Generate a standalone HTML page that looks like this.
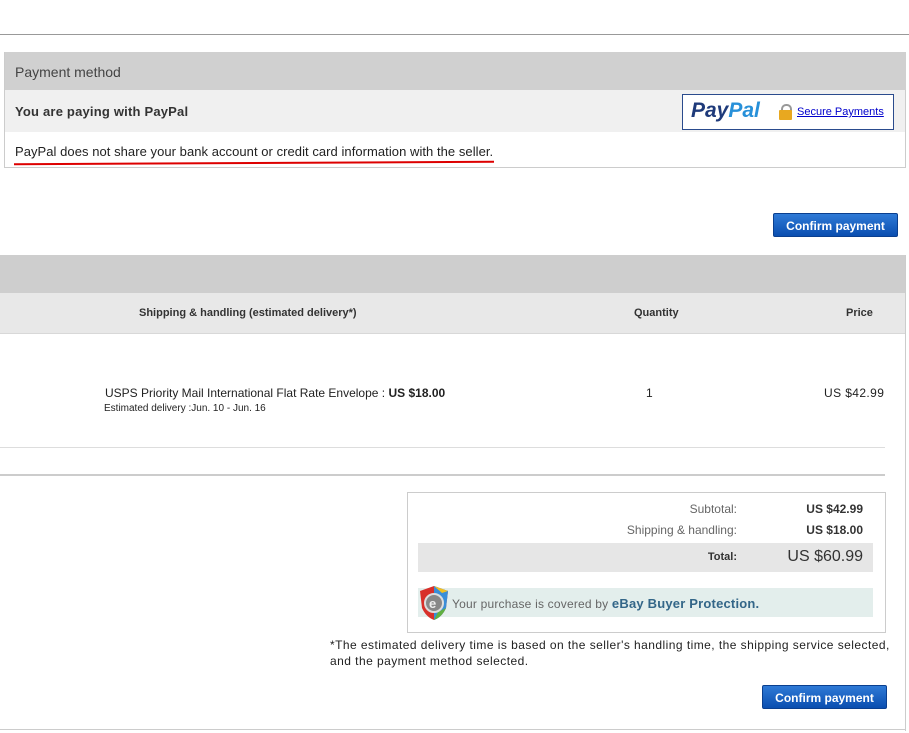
<!DOCTYPE html>
<html><head><style>
body{margin:0;width:909px;height:733px;position:relative;background:#fff;font-family:"Liberation Sans",Arial,sans-serif;overflow:hidden}
.a{position:absolute}
.btn{position:absolute;background:linear-gradient(#2f7ad6,#0a4eb0);color:#fff;font-weight:bold;font-size:12px;border-radius:2px;text-align:center;line-height:24px;border:1px solid #0a3f8f;box-sizing:border-box}
</style></head><body>
<div class="a" style="left:0;top:34px;width:909px;height:1px;background:#999"></div>
<div class="a" style="left:4px;top:52px;width:902px;height:116px;border:1px solid #ccc;box-sizing:border-box"></div>
<div class="a" style="left:5px;top:52px;width:901px;height:38px;background:#d0d0d0"></div>
<div class="a" style="left:15px;top:64px;font-size:14px;color:#444">Payment method</div>
<div class="a" style="left:5px;top:90px;width:900px;height:42px;background:#f0f0f0"></div>
<div class="a" style="left:15px;top:104px;font-size:13px;color:#333;font-weight:bold;letter-spacing:0.2px">You are paying with PayPal</div>
<div class="a" style="left:682px;top:94px;width:212px;height:36px;border:1px solid #2a4b8d;background:#fff;box-sizing:border-box"></div>
<div class="a" style="left:691px;top:99px;font-size:21px;font-weight:bold;font-style:italic;color:#1e3a7a">Pay<span style="color:#2790d9">Pal</span></div>
<div class="a" style="left:779px;top:104px;width:13px;height:15px"><div style="position:absolute;left:2px;top:0;width:7px;height:8px;border:2px solid #999;border-bottom:none;border-radius:5px 5px 0 0"></div><div style="position:absolute;left:0;top:6px;width:13px;height:10px;background:#e8a820;border-radius:1px"></div></div>
<div class="a" style="left:797px;top:106px;font-size:11px;color:#0000cc;text-decoration:underline">Secure Payments</div>
<div class="a" style="left:15px;top:144px;font-size:13px;color:#222;letter-spacing:0.05px">PayPal does not share your bank account or credit card information with the seller.</div>
<div class="a" style="left:14px;top:162px;width:480px;height:2px;background:#d00;transform:rotate(-0.3deg)"></div>
<div class="btn" style="left:773px;top:213px;width:125px;height:24px">Confirm payment</div>
<div class="a" style="left:905px;top:255px;width:1px;height:476px;background:#ccc"></div>
<div class="a" style="left:0;top:255px;width:905px;height:38px;background:#cecece"></div>
<div class="a" style="left:0;top:293px;width:905px;height:40px;background:#e8e8e8;border-bottom:1px solid #d8d8d8"></div>
<div class="a" style="left:139px;top:307px;font-size:11px;font-weight:bold;color:#333">Shipping &amp; handling (estimated delivery*)</div>
<div class="a" style="left:634px;top:307px;font-size:11px;font-weight:bold;color:#333">Quantity</div>
<div class="a" style="left:846px;top:307px;font-size:11px;font-weight:bold;color:#333">Price</div>
<div class="a" style="left:105px;top:386px;font-size:12px;color:#222">USPS Priority Mail International Flat Rate Envelope : <b>US $18.00</b></div>
<div class="a" style="left:104px;top:403px;font-size:10px;color:#222">Estimated delivery :Jun. 10 - Jun. 16</div>
<div class="a" style="left:646px;top:386px;font-size:12px;color:#222">1</div>
<div class="a" style="left:824px;top:386px;font-size:12px;color:#222;letter-spacing:0.4px">US $42.99</div>
<div class="a" style="left:0;top:447px;width:885px;height:1px;background:#ddd"></div>
<div class="a" style="left:0;top:474px;width:885px;height:2px;background:#ccc"></div>
<div class="a" style="left:407px;top:492px;width:479px;height:141px;border:1px solid #ccc;box-sizing:border-box"></div>
<div class="a" style="left:560px;top:502px;width:177px;text-align:right;font-size:12px;color:#666">Subtotal:</div>
<div class="a" style="left:763px;top:502px;width:100px;text-align:right;font-size:12px;font-weight:bold;color:#333">US $42.99</div>
<div class="a" style="left:560px;top:523px;width:177px;text-align:right;font-size:12px;color:#666">Shipping &amp; handling:</div>
<div class="a" style="left:763px;top:523px;width:100px;text-align:right;font-size:12px;font-weight:bold;color:#333">US $18.00</div>
<div class="a" style="left:418px;top:543px;width:455px;height:29px;background:#e6e6e6"></div>
<div class="a" style="left:560px;top:551px;width:177px;text-align:right;font-size:11px;font-weight:bold;color:#333">Total:</div>
<div class="a" style="left:743px;top:548px;width:120px;text-align:right;font-size:16px;color:#333">US $60.99</div>
<div class="a" style="left:418px;top:588px;width:455px;height:29px;background:#e3eeec"></div>
<svg class="a" style="left:418px;top:584px" width="32" height="38" viewBox="0 0 32 38"><path d="M16 2 L30 7 L28 24 Q24 33 16 36 Q8 33 4 24 L2 7 Z" fill="#d8302a"/><path d="M16 2 L30 7 L28 24 Q24 33 16 36 Z" fill="#3a8ed8"/><path d="M16 2 L30 7 L24 9 Z" fill="#f2c020"/><path d="M28 24 Q24 33 16 36 L20 28 Z" fill="#60b040"/><circle cx="16" cy="19" r="9" fill="#888" stroke="#ddd" stroke-width="2"/><text x="11" y="24" font-size="13" font-weight="bold" fill="#eee" font-family="Liberation Sans">e</text></svg>
<div class="a" style="left:452px;top:596px;font-size:12px;color:#666;letter-spacing:0.2px">Your purchase is covered by <b style="color:#336688;font-size:13px">eBay Buyer Protection.</b></div>
<div class="a" style="left:330px;top:637px;font-size:12px;color:#222;line-height:16px;width:575px;letter-spacing:0.45px">*The estimated delivery time is based on the seller's handling time, the shipping service selected,<br>and the payment method selected.</div>
<div class="btn" style="left:762px;top:685px;width:125px;height:24px">Confirm payment</div>
<div class="a" style="left:0;top:729px;width:906px;height:1px;background:#ccc"></div>
</body></html>
